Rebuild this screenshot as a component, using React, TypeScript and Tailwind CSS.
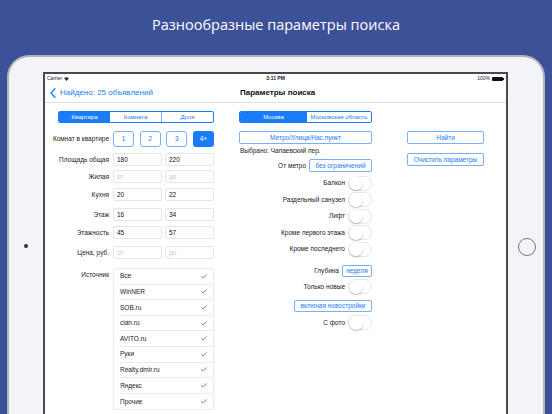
import React from "react";

const sources = ["Все", "WinNER", "SOB.ru", "cian.ru", "AVITO.ru", "Руки", "Realty.dmir.ru", "Яндекс", "Прочие"];

function Label({ children }: { children: React.ReactNode }) {
  return <span className="block w-[64px] shrink-0 text-right text-[6.5px] text-[#222]">{children}</span>;
}

function Field({ value, placeholder }: { value?: string; placeholder: string }) {
  return (
    <div className="flex h-full w-[49px] items-center rounded-[2px] border border-[#e6e6e6] bg-white px-[3px] text-[6.5px]">
      {value ? <span className="text-[#111]">{value}</span> : <span className="text-[#c9c9c9]">{placeholder}</span>}
    </div>
  );
}

function RangeRow({ label, from, to, className }: { label: string; from?: string; to?: string; className: string }) {
  return (
    <div className={`flex h-[13px] items-center gap-[4px] ${className}`}>
      <Label>{label}</Label>
      <div className="flex h-full w-[101px] justify-between">
        <Field value={from} placeholder="от" />
        <Field value={to} placeholder="до" />
      </div>
    </div>
  );
}

function Toggle() {
  return (
    <div className="flex h-[15px] w-[24px] shrink-0 items-center rounded-full border border-[#e4e4e4] bg-white">
      <div className="h-[14px] w-[14px] rounded-full bg-white shadow-[0_1px_1.5px_rgba(0,0,0,0.25)]" />
    </div>
  );
}

function ToggleRow({ label, className = "" }: { label: string; className?: string }) {
  return (
    <div className={`flex h-[16.5px] items-center justify-end gap-[3px] ${className}`}>
      <span className="text-[6.5px] text-[#222]">{label}</span>
      <Toggle />
    </div>
  );
}

function OutlineButton({ children, className = "" }: { children: React.ReactNode; className?: string }) {
  return (
    <div
      className={`flex items-center justify-center rounded-[2px] border border-[#7aaef5] bg-white text-[6.5px] text-[#1a7cf6] ${className}`}
    >
      {children}
    </div>
  );
}

function Check() {
  return (
    <svg width="6" height="5" viewBox="0 0 6 5" fill="none">
      <path d="M0.6 2.7 L2.2 4.1 L5.4 0.7" stroke="#1a7cf6" strokeWidth="0.8" strokeLinecap="round" strokeLinejoin="round" />
    </svg>
  );
}

export default function App() {
  return (
    <div className="flex h-[414px] w-[552px] flex-col overflow-hidden bg-[#3d5199] font-['Liberation_Sans',Arial,sans-serif]">
      <div className="flex h-[55px] items-center justify-center pb-[6px]">
        <h1 className="font-['Open_Sans',sans-serif] text-[14.5px] text-white">Разнообразные параметры поиска</h1>
      </div>

      <div className="ml-[7px] flex w-[538px] flex-1 rounded-t-[22px] border-2 border-b-0 border-[#aeb3bc] bg-[#f3f4f7] pt-[15px]">
        <div className="flex w-[34px] shrink-0 justify-center">
          <div className="mt-[172px] h-[4px] w-[4px] rounded-full bg-[#2e2e2e]" />
        </div>

        <div className="w-[465px] shrink-0 border-2 border-b-0 border-[#4a4a4a] bg-white">
          {/* status bar */}
          <div className="flex h-[9px] items-center justify-between px-[2px] text-[5px] text-[#222]">
            <div className="flex w-[60px] items-center gap-[2px]">
              <span>Carrier</span>
              <svg width="5" height="4" viewBox="0 0 10 8">
                <path d="M5 8 L0 2.5 Q5 -1.5 10 2.5 Z" fill="#333" />
              </svg>
            </div>
            <span className="font-bold">3:11 PM</span>
            <div className="flex w-[60px] items-center justify-end gap-[2px]">
              <span>100%</span>
              <div className="flex items-center">
                <div className="h-[4px] w-[11px] rounded-[1px] bg-[#111]" />
                <div className="h-[2px] w-[1px] bg-[#111]" />
              </div>
            </div>
          </div>

          {/* nav bar */}
          <div className="flex h-[20px] items-center border-b border-[#dedede]">
            <div className="flex w-[169px] items-center pl-[5px]">
              <svg width="6" height="10" viewBox="0 0 6 10" fill="none">
                <path d="M5 0.8 L1 5 L5 9.2" stroke="#1a7cf6" strokeWidth="1.3" strokeLinecap="round" strokeLinejoin="round" />
              </svg>
              <span className="ml-[4px] text-[8px] text-[#1a7cf6]">Найдено: 25 объявлений</span>
            </div>
            <span className="ml-[26px] text-[8px] font-bold text-[#111]">Параметры поиска</span>
          </div>

          {/* content */}
          <div className="flex">
            {/* left column */}
            <div className="flex w-[169px] shrink-0 flex-col">
              <div className="ml-[13px] mt-[8px] flex h-[12px] w-[156px] overflow-hidden rounded-[2px] border border-[#1a7cf6] text-[6px]">
                <div className="flex flex-1 items-center justify-center bg-[#1a7cf6] text-white">Квартира</div>
                <div className="flex flex-1 items-center justify-center border-r border-[#7aaef5] text-[#1a7cf6]">Комната</div>
                <div className="flex flex-1 items-center justify-center text-[#1a7cf6]">Доля</div>
              </div>

              <div className="mt-[8px] flex h-[16px] items-center gap-[4px]">
                <Label>Комнат в квартире</Label>
                <div className="flex h-full w-[101px] justify-between">
                  {["1", "2", "3"].map((n) => (
                    <OutlineButton key={n} className="h-full w-[21px] rounded-[3px]">
                      {n}
                    </OutlineButton>
                  ))}
                  <div className="flex h-full w-[21px] items-center justify-center rounded-[3px] bg-[#1a7cf6] text-[6.5px] text-white">
                    4+
                  </div>
                </div>
              </div>

              <RangeRow label="Площадь общая" from="180" to="220" className="mt-[6px]" />
              <RangeRow label="Жилая" className="mt-[4px]" />
              <RangeRow label="Кухня" from="20" to="22" className="mt-[5px]" />
              <RangeRow label="Этаж" from="16" to="34" className="mt-[7px]" />
              <RangeRow label="Этажность" from="45" to="57" className="mt-[5px]" />
              <RangeRow label="Цена, руб." className="mt-[7px]" />

              <div className="mt-[9px] flex items-start gap-[4px]">
                <div className="pt-[2px]">
                  <Label>Источник</Label>
                </div>
                <div className="w-[101px] rounded-[2px] border border-[#ececec] bg-white">
                  {sources.map((s, i) => (
                    <div key={s} className="flex h-[15.6px] items-center pl-[6px]">
                      <div
                        className={`flex h-full flex-1 items-center justify-between pr-[6px] ${
                          i < sources.length - 1 ? "border-b border-[#ececec]" : ""
                        }`}
                      >
                        <span className="text-[6.5px] text-[#222]">{s}</span>
                        <Check />
                      </div>
                    </div>
                  ))}
                </div>
              </div>
            </div>

            {/* middle column */}
            <div className="ml-[25px] flex w-[133px] shrink-0 flex-col">
              <div className="mt-[8px] flex h-[12px] overflow-hidden rounded-[2px] border border-[#1a7cf6] text-[6px]">
                <div className="flex w-[67px] items-center justify-center bg-[#1a7cf6] text-white">Москва</div>
                <div className="flex flex-1 items-center justify-center text-[#1a7cf6]">Московская область</div>
              </div>
              <OutlineButton className="mt-[8px] h-[13px]">Метро/Улица/Нас.пункт</OutlineButton>
              <div className="mt-[3px] flex h-[8px] items-center pl-[1px] text-[6.5px] text-[#222]">Выбрано: Чапаевский пер.</div>
              <div className="mt-[4px] flex h-[13px] items-center justify-end gap-[3px]">
                <span className="text-[6.5px] text-[#222]">От метро</span>
                <OutlineButton className="h-full w-[63px]">без ограничений</OutlineButton>
              </div>
              <ToggleRow label="Балкон" className="mt-[3px]" />
              <ToggleRow label="Раздельный санузел" />
              <ToggleRow label="Лифт" />
              <ToggleRow label="Кроме первого этажа" />
              <ToggleRow label="Кроме последнего" />
              <div className="mt-[7px] flex h-[12px] items-center justify-end gap-[3px]">
                <span className="text-[6.5px] text-[#222]">Глубина</span>
                <OutlineButton className="h-full w-[30px]">неделя</OutlineButton>
              </div>
              <ToggleRow label="Только новые" className="mt-[2px] h-[16px]" />
              <div className="mt-[5px] flex h-[12px] justify-end">
                <OutlineButton className="h-full w-[78px]">включая новостройки</OutlineButton>
              </div>
              <ToggleRow label="С фото" className="mt-[3px] h-[16px]" />
            </div>

            {/* right column */}
            <div className="ml-[35px] flex w-[77px] shrink-0 flex-col">
              <OutlineButton className="mt-[28px] h-[13px]">Найти</OutlineButton>
              <OutlineButton className="mt-[9px] h-[13px]">Очистить параметры</OutlineButton>
            </div>
          </div>
        </div>

        <div className="flex w-[35px] shrink-0 justify-center">
          <div className="ml-[2px] mt-[166px] h-[18px] w-[18px] rounded-full border border-[#777]" />
        </div>
      </div>
    </div>
  );
}
